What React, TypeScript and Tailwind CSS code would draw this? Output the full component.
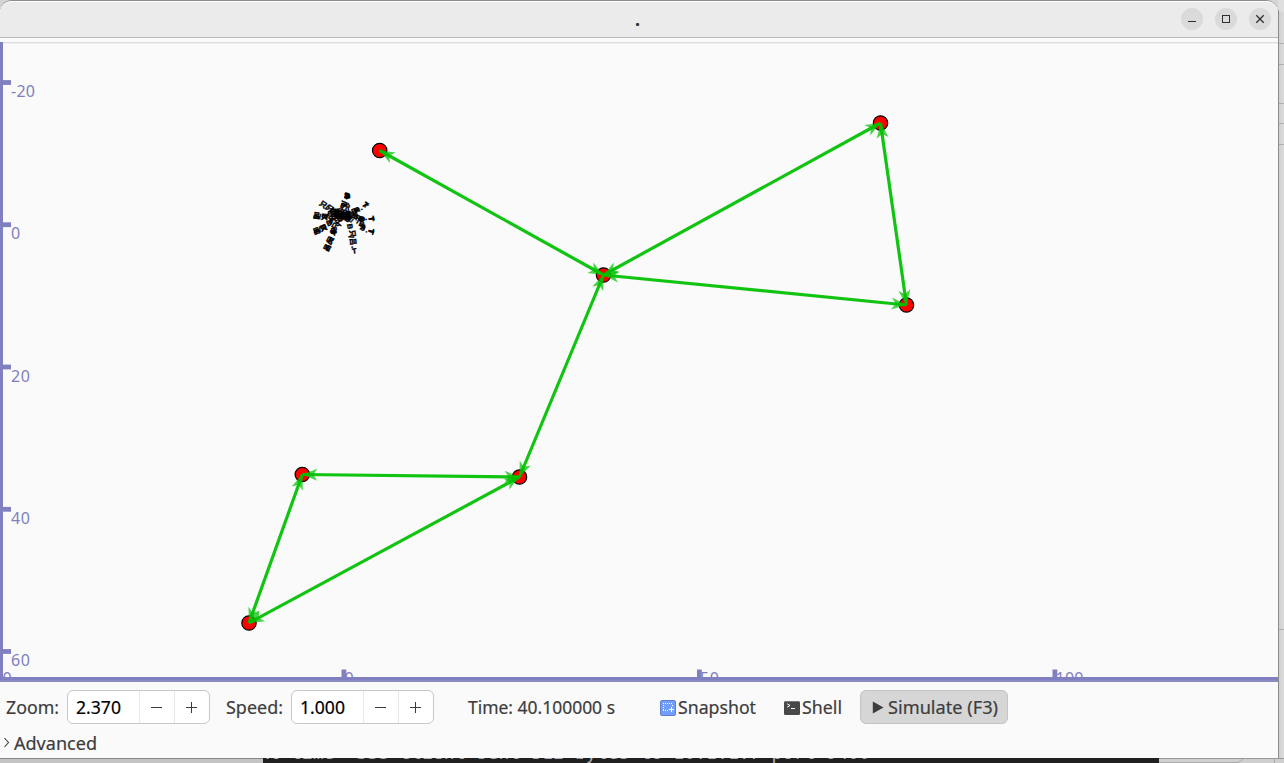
import React from "react";

type Point = [number, number];

const nodes: Point[] = [
  [379.7, 150.5],
  [603.5, 275],
  [880.5, 123],
  [906.5, 305],
  [519.5, 477],
  [302.3, 474.5],
  [249, 623],
];

const links: Point[] = [
  [0, 1],
  [1, 2],
  [2, 3],
  [1, 3],
  [1, 4],
  [4, 5],
  [4, 6],
  [5, 6],
];

const yTicks = [
  { y: 82.5, label: "-20" },
  { y: 224.7, label: "0" },
  { y: 367, label: "20" },
  { y: 509.3, label: "40" },
  { y: 651.5, label: "60" },
];

const xTicks = [
  { x: 344, label: "0", w: 9 },
  { x: 699.5, label: "50", w: 19 },
  { x: 1055, label: "100", w: 28 },
];

const clutter: [number, number, string, number][] = [
  [347, 196, "R", 95], [347.5, 197, "8", 75], [347, 195.5, "B", 10], [344, 204, "/8", 100], [347, 206, "R", 60], [342.5, 205.5, "8", 20],
  [323.3, 204.5, "只", 35], [327, 207, "/", 30], [330, 208.5, "只", 35], [333, 211, "/8", 35],
  [316.5, 215.8, "吕", 8], [316.5, 217, "8", 98], [320, 216, "/", 0], [324.5, 217, "只", 5], [324, 216.5, "8", 90], [327, 216, "/", 0], [330, 214, "B", 8],
  [316.5, 231, "吕", -22], [316.8, 231, "8", 60], [319.8, 229.5, "/", -20], [323.5, 228, "只", -22], [323.5, 227.5, "R", 60], [329, 223, "B", -25], [331, 221, "8", 30],
  [332.5, 232, "8", -60], [334, 232.5, "R", 30], [333.5, 230, "B", 0], [335.5, 226, "只", -60], [339, 224, "/", -60],
  [330.3, 240, "只", -62], [331, 240, "R", 28], [329, 243, "/", -60], [327.3, 247.8, "吕", -62], [327.5, 248, "8", -20],
  [350, 226.5, "B", 80], [352.5, 233.5, "只", 83], [351, 237, "/", 83], [353, 241.5, "吕", 83],
  [354.2, 247, ".", 83], [354.5, 251, "T", -8],
  [354, 211, "B", -25], [357, 210, "R", -28], [357, 210, "8", 60], [361, 207.5, ".", -20], [365, 205, "T", 60], [366, 205, "T", 30],
  [371, 219, "T", 88], [371.5, 218.5, "T", 75], [366, 217.5, ".", 0], [362, 219, "B", 5], [362, 219, "8", 95], [358, 218, "R", 10],
  [371, 232, "T", 110], [371, 231, "T", 100], [367, 230, ".", 20], [363, 228, "8", 20], [362.5, 227, "R", 90], [361.5, 224, "B", 20], [358, 221, "/", 20],
  [335, 212, "R8", 20], [336, 216, "B8", 0], [338, 220, "B/", -30], [342, 216, "RB", 15],
  [346, 218, "8B", 40], [346, 212, "R/", -20], [351, 215, "8B", 10], [341, 211, "/R", 50],
  [339, 214, "8B", -10], [345, 215, "BR", -20], [350, 219, "R/", 30], [355, 216, "/8", 10],
  [340, 217, "8B", 70], [348, 216, "BR", 95], [333, 217, "R8", -40], [337, 213, "8B", 80],
];

function Arrow({ from, to }: { from: Point; to: Point }) {
  const angle = (Math.atan2(to[1] - from[1], to[0] - from[0]) * 180) / Math.PI;
  return (
    <path
      d="M0 0 L-15 -6 L-11 0 L-15 6 Z"
      fill="#00c000"
      fillOpacity={0.7}
      transform={`translate(${to[0]} ${to[1]}) rotate(${angle})`}
    />
  );
}

function NetworkCanvas() {
  return (
    <svg width="1278" height="640" viewBox="0 42 1278 640" className="block shrink-0">
      <defs>
        <clipPath id="plot">
          <rect x="0" y="42" width="1278" height="635" />
        </clipPath>
      </defs>
      <path d="M0 42.5H1278" stroke="#dedede" />
      <path d="M0 43.5H1278" stroke="#f0f0f0" />
      {nodes.map(([x, y]) => (
        <circle key={x} cx={x} cy={y} r="7.2" fill="#ff0000" stroke="#000" strokeWidth="1.2" />
      ))}
      {links.map(([a, b]) => (
        <g key={`${a}-${b}`}>
          <line
            x1={nodes[a][0]}
            y1={nodes[a][1]}
            x2={nodes[b][0]}
            y2={nodes[b][1]}
            stroke="#00c000"
            strokeOpacity="0.93"
            strokeWidth="3.2"
          />
          <Arrow from={nodes[a]} to={nodes[b]} />
          <Arrow from={nodes[b]} to={nodes[a]} />
        </g>
      ))}
      <g
        fontSize="7.4"
        fontWeight="700"
        textAnchor="middle"
        dominantBaseline="central"
        fill="#000"
        stroke="#000"
        strokeWidth="0.4"
        className="font-['Liberation_Sans','Noto_Sans_CJK_SC',sans-serif]"
      >
        {clutter.map(([x, y, glyph, angle], i) => (
          <text key={i} x="0" y="0" transform={`translate(${x} ${y}) rotate(${angle})`}>
            {glyph}
          </text>
        ))}
      </g>
      <g fill="#8080c0" fontSize="16" className="font-['Noto_Sans',sans-serif]">
        <rect x="0" y="42" width="3" height="640" />
        {yTicks.map(({ y, label }) => (
          <g key={label}>
            <rect x="0" y={y - 2.4} width="11" height="4.8" />
            <text x="11" y={y + 14.6} textLength={label === "-20" ? 24 : label === "0" ? 9.5 : 19}>
              {label}
            </text>
          </g>
        ))}
        <g clipPath="url(#plot)">
          <text x="2.5" y="683.5">0</text>
          {xTicks.map(({ x, label, w }) => (
            <g key={label}>
              <rect x={x - 2.5} y="669.5" width="4.8" height="10" />
              <text x={x + 0.5} y="683.5" textLength={w}>
                {label}
              </text>
            </g>
          ))}
        </g>
        <rect x="0" y="677" width="1278" height="5" />
        <rect x="0" y="680" width="1278" height="2" fill="#8c8cc2" />
      </g>
    </svg>
  );
}

function Label({ text, width }: { text: string; width: number }) {
  return (
    <svg width={width} height="26" className="block shrink-0 overflow-visible">
      <text
        x="0"
        y="20"
        fontSize="18"
        fill="currentColor"
        stroke="currentColor"
        strokeWidth="0.2"
        textLength={width}
        lengthAdjust="spacingAndGlyphs"
      >
        {text}
      </text>
    </svg>
  );
}

function SpinBox({ value }: { value: string }) {
  return (
    <div className="flex h-[34px] w-[143px] shrink-0 overflow-hidden rounded-[6px] border border-[#c8c8c8] bg-white">
      <div className="flex w-[72px] items-center border-r border-[#e8e8e8] pl-2 text-black">
        <Label text={value} width={45} />
      </div>
      <div className="flex w-[35px] items-center border-r border-[#e8e8e8] pl-[11px]">
        <svg width="11" height="11" stroke="#3d3d3d">
          <path d="M0 5.5H11" />
        </svg>
      </div>
      <div className="flex flex-1 items-center pl-[11px]">
        <svg width="11" height="11" stroke="#3d3d3d">
          <path d="M0 5.5H11M5.5 0V11" />
        </svg>
      </div>
    </div>
  );
}

function TitleBar() {
  return (
    <header className="flex h-[37px] shrink-0 rounded-t-[12px] border-b border-t border-b-[#bababa] border-t-white bg-[#ebebeb]">
      <div className="w-[1181px] pl-[635px] pt-[5px] text-[18px] font-bold leading-6 text-[#2d2d2d]">.</div>
      <div className="flex gap-3 pt-[6px]">
        <svg width="22" height="22">
          <circle cx="11" cy="11" r="11" fill="#dadada" />
          <path d="M7 13.5H15" stroke="#303030" />
        </svg>
        <svg width="22" height="22">
          <circle cx="11" cy="11" r="11" fill="#dadada" />
          <rect x="7.5" y="7.5" width="7" height="7" fill="none" stroke="#303030" />
        </svg>
        <svg width="22" height="22">
          <circle cx="11" cy="11" r="11" fill="#dadada" />
          <path d="M7.3 7.3L14.7 14.7M14.7 7.3L7.3 14.7" stroke="#303030" strokeWidth="1.3" />
        </svg>
      </div>
    </header>
  );
}

function Controls() {
  return (
    <footer className="flex h-[76px] shrink-0 flex-col text-[#3d3d3d]">
      <div className="flex h-[42px] items-start pt-2">
        <div className="flex h-[34px] w-[67px] shrink-0 items-center pl-[6px]">
          <Label text="Zoom:" width={53} />
        </div>
        <SpinBox value="2.370" />
        <div className="flex h-[34px] w-[81px] shrink-0 items-center pl-4">
          <Label text="Speed:" width={57} />
        </div>
        <SpinBox value="1.000" />
        <div className="flex h-[34px] w-[226px] shrink-0 items-center pl-[34px]">
          <Label text="Time: 40.100000 s" width={147} />
        </div>
        <div className="flex h-[34px] w-[124px] shrink-0 items-center gap-[2px]">
          <svg width="16" height="16" className="mt-[2px]">
            <rect x="0.5" y="0.5" width="15" height="15" rx="1.5" fill="#729fff" stroke="#647fc5" />
            <path d="M3 3.5H13M3.5 5V11M12.5 5V7M3 10.5H8" fill="none" stroke="#fff" strokeDasharray="1 1" />
            <path d="M9 9.5H14M11.5 7V12" stroke="#fff" />
          </svg>
          <Label text="Snapshot" width={78} />
        </div>
        <div className="flex h-[34px] w-[76px] shrink-0 items-center gap-[2px]">
          <svg width="16" height="16" className="mt-[2px]">
            <rect x="0" y="1" width="16" height="14" rx="1.5" fill="#484848" />
            <path d="M1 1.5H15" stroke="#777" />
            <path d="M3.2 3.8L6 5.5L3.2 7.2M7 8.5H11" fill="none" stroke="#fff" />
          </svg>
          <Label text="Shell" width={40} />
        </div>
        <button className="flex h-[34px] w-[148px] shrink-0 items-center gap-1 rounded-[6px] border border-[#c4c4c4] bg-[#d6d6d6] pl-[11px]">
          <svg width="12" height="14">
            <path d="M0.8 1.5V13.5L11.5 7.5Z" fill="#3d3d3d" />
          </svg>
          <Label text="Simulate (F3)" width={110} />
        </button>
      </div>
      <div className="flex h-[34px] items-center gap-[4px] pb-[2px] pl-[3px] pt-[6px]">
        <svg width="7" height="12" fill="none" stroke="#3d3d3d" strokeWidth="1.1">
          <path d="M1.5 1L5.5 5.5L1.5 10" />
        </svg>
        <Label text="Advanced" width={83} />
      </div>
    </footer>
  );
}

export default function App() {
  return (
    <div className="grid h-[763px] w-[1284px] grid-cols-[1278px_6px] grid-rows-[758px_5px] overflow-hidden bg-[#d4d4d4] font-['Noto_Sans',sans-serif]">
      <main className="flex flex-col overflow-hidden rounded-tr-[12px] rounded-tl-[12px] border-t border-t-[#8c8c8c] bg-[#fafafa]">
        <TitleBar />
        <div className="h-1 shrink-0 bg-[#fafafa]" />
        <NetworkCanvas />
        <Controls />
      </main>
      <svg width="6" height="758" className="bg-[#d2d2d2]">
        <rect x="0" y="0" width="6" height="12" fill="#dedede" />
        <rect x="3" y="12" width="3" height="746" fill="#d8d8d8" />
        <path d="M0 43.5H6M0 64.5H6M0 103.5H6M0 123.5H6M0 144.5H6M0 629.5H6" stroke="#aeb0b4" />
        <path d="M0.5 10V758" stroke="#8b8b8b" />
      </svg>
      <div className="col-span-2 flex h-[5px] overflow-hidden bg-[#d0d0d0]">
        <div className="w-[263px] border-t border-[#888888] bg-[#c4c4c4]" />
        <div className="h-[5px] w-[896px] overflow-hidden bg-[#202020]">
          <svg width="896" height="5" className="block">
            <text x="-5" y="1.3" fontSize="18.2" fill="#b0b0b0" textLength="612" className="font-['DejaVu_Sans_Mono',monospace]">
              At time +33s client sent 512 bytes to 10.1.1.7 port 9400
            </text>
          </svg>
        </div>
        <div className="w-[125px] border-t border-[#999999] bg-[#cfcfcf]">
          <svg width="125" height="4" className="block" fill="none" stroke="#aaaaaa">
            <path d="M0 3.5H78Q82 3 84 0M115.5 0V4" />
          </svg>
        </div>
      </div>
    </div>
  );
}
